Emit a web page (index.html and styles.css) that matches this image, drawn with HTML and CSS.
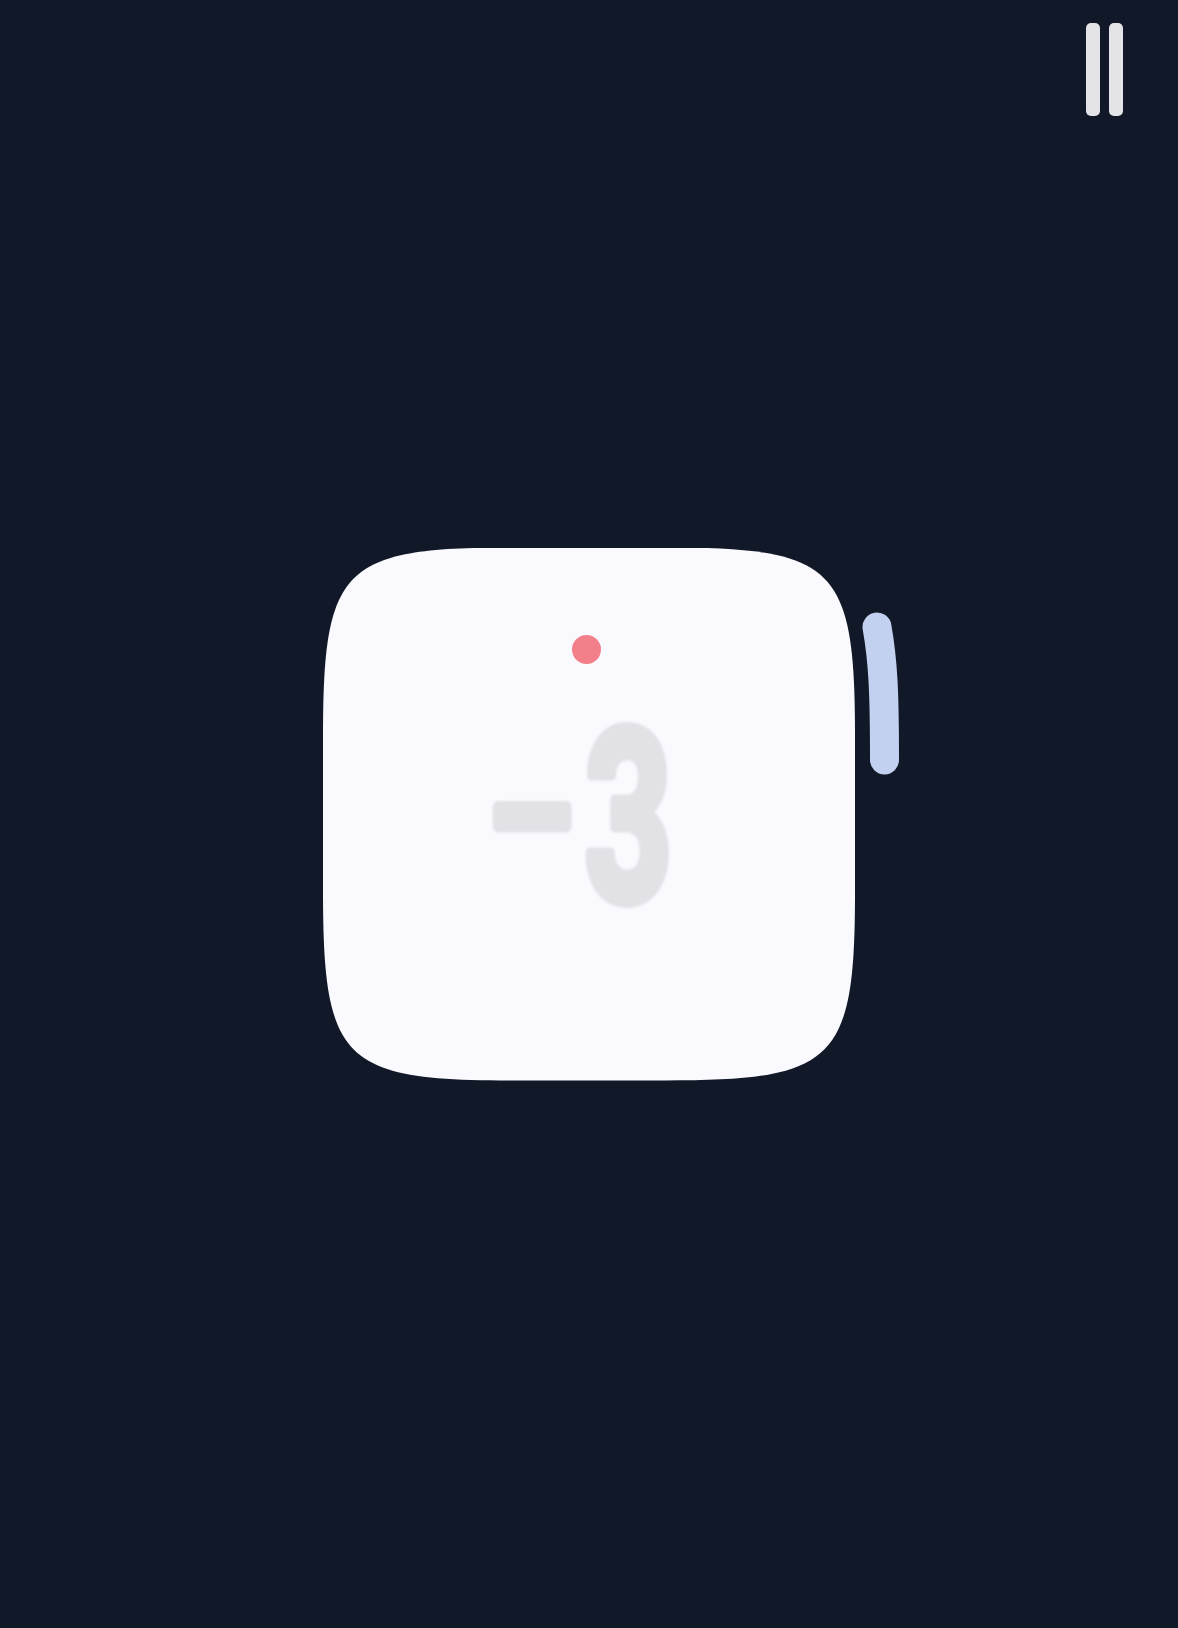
FILE: index.html
```html
<!DOCTYPE html>
<html lang="en">
<head>
<meta charset="utf-8">
<title>Countdown</title>
<link rel="stylesheet" href="styles.css">
</head>
<body>
<main class="stage">
  <button class="pause" aria-label="Pause">
    <span class="pause-bar"></span>
    <span class="pause-bar"></span>
  </button>
  <div class="card-wrap">
    <div class="card">
      <span class="dot"></span>
      <svg class="count" width="532" height="310" viewBox="0 0 532 310" role="img" aria-label="-3">
        <text class="count-text minus" x="294.4" y="237" transform="scale(0.71 1)">−</text>
        <text class="count-text digit" x="477.3" y="236" transform="scale(0.64 1)">3</text>
      </svg>
    </div>
    <svg class="handle" width="60" height="240" viewBox="0 0 60 240" aria-hidden="true">
      <path d="M 22 79 C 28 113 29.5 143 29.5 212" fill="none" stroke="#c3d1f1" stroke-width="29" stroke-linecap="round"/>
    </svg>
  </div>
</main>
</body>
</html>
```
FILE: styles.css
```css
html, body {
  margin: 0;
  padding: 0;
  background: #111827;
}
body {
  font-family: Roboto, "Liberation Sans", sans-serif;
}
.stage {
  position: relative;
  width: 100%;
  min-height: 100vh;
  display: flex;
  align-items: center;
  justify-content: center;
}
.pause {
  position: absolute;
  top: 23px;
  right: 55px;
  display: flex;
  gap: 9px;
  padding: 0;
  margin: 0;
  border: 0;
  background: transparent;
}
.pause-bar {
  display: block;
  width: 14px;
  height: 93px;
  border-radius: 5px;
  background: #e4e4e8;
}
.card-wrap {
  position: relative;
  width: 532px;
  height: 533px;
}
.card {
  width: 532px;
  height: 533px;
  background: #f9f9fe;
  clip-path: path("M 0 190 C 0 19 19 0 190 0 L 342 0 C 513 0 532 19 532 190 L 532 343 C 532 514 513 533 342 533 L 190 533 C 19 533 0 514 0 343 Z");
  display: flex;
  flex-direction: column;
  align-items: center;
}
.dot {
  display: block;
  flex: none;
  width: 29px;
  height: 29px;
  border-radius: 50%;
  background: #f27f89;
  margin-top: 87px;
  margin-left: -6px;
}
.count {
  display: block;
  flex: none;
  filter: blur(0.8px);
}
.count-text {
  font-family: Roboto, sans-serif;
  font-size: 238px;
  fill: #e1e1e6;
  stroke: #e1e1e6;
  stroke-width: 12px;
  stroke-linejoin: round;
  text-anchor: middle;
}
.minus {
  font-weight: 400;
  stroke-width: 14px;
}
.digit {
  font-weight: 700;
}
.handle {
  position: absolute;
  left: 532px;
  top: 0;
}
```
